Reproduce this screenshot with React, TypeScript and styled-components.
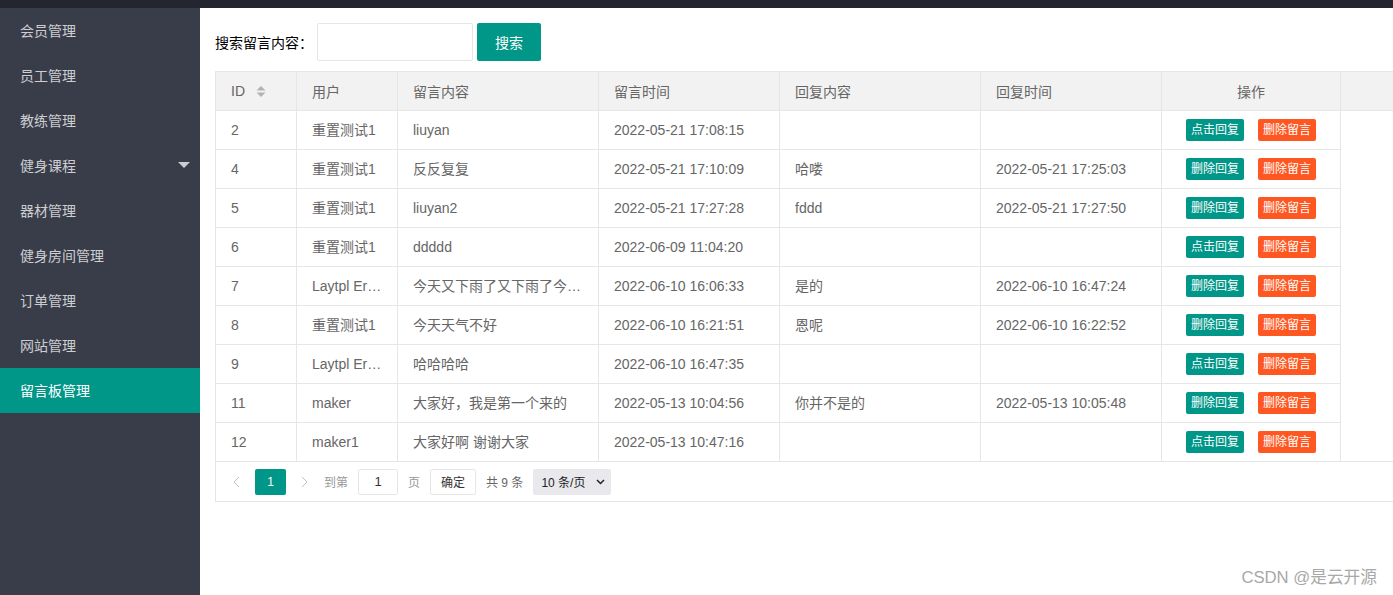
import React from 'react';
import styled, { createGlobalStyle } from 'styled-components';

const GlobalStyle = createGlobalStyle`
	html, body {
		margin: 0;
		padding: 0;
		overflow: hidden;
		background: #fff;
		font-family: 'Liberation Sans', 'Noto Sans CJK SC', Arial, sans-serif;
		font-size: 14px;
		color: #666;
	}
	* {
		box-sizing: border-box;
	}
`;

const TopBar = styled.div`
	height: 8px;
	background: #23262e;
`;

const Layout = styled.div`
	display: flex;
	height: 587px;
`;

const Side = styled.nav`
	width: 200px;
	flex-shrink: 0;
	background: #393d49;
`;

const MenuItem = styled.div<{ $active?: boolean }>`
	display: flex;
	align-items: center;
	justify-content: space-between;
	height: 45px;
	padding: 0 10px 2px 20px;
	font-size: 14px;
	color: ${(p) => (p.$active ? '#fff' : 'rgba(255, 255, 255, 0.75)')};
	background: ${(p) => (p.$active ? '#009688' : 'transparent')};
`;

const Caret = styled.span`
	width: 0;
	height: 0;
	border-left: 6px solid transparent;
	border-right: 6px solid transparent;
	border-top: 6px solid rgba(255, 255, 255, 0.75);
	margin-top: 1px;
`;

const Main = styled.main`
	flex: 1;
	min-width: 0;
	overflow: hidden;
	padding: 15px 0 0 15px;
`;

const SearchRow = styled.div`
	display: flex;
	align-items: center;
	height: 38px;
	margin-bottom: 10px;
`;

const SearchLabel = styled.label`
	color: #000;
	font-size: 14px;
	margin-right: 4px;
`;

const SearchInput = styled.input`
	width: 156px;
	height: 38px;
	border: 1px solid #e6e6e6;
	border-radius: 2px;
	padding: 0 10px;
	outline: 0;
	font: inherit;
`;

const SearchButton = styled.button`
	width: 64px;
	height: 38px;
	margin-left: 4px;
	border: 0;
	border-radius: 2px;
	background: #009688;
	color: #fff;
	font: inherit;
	font-size: 14px;
`;

const TableBox = styled.div`
	width: 1200px;
	border-left: 1px solid #e6e6e6;
	border-bottom: 1px solid #e6e6e6;
`;

const Table = styled.table`
	border-collapse: collapse;
	table-layout: fixed;
	width: 100%;
	margin-left: -1px;
`;

const Th = styled.th<{ $center?: boolean }>`
	height: 39px;
	padding: 0 15px;
	background: #f2f2f2;
	border: 1px solid #e6e6e6;
	font-weight: normal;
	text-align: ${(p) => (p.$center ? 'center' : 'left')};
	color: #666;
	white-space: nowrap;
`;

const Td = styled.td<{ $center?: boolean; $blank?: boolean }>`
	height: 39px;
	padding: 0 15px;
	border: ${(p) => (p.$blank ? '0' : '1px solid #e6e6e6')};
	border-left: 1px solid #e6e6e6;
	text-align: ${(p) => (p.$center ? 'center' : 'left')};
	color: #666;
`;

const Cell = styled.div`
	white-space: nowrap;
	overflow: hidden;
	text-overflow: ellipsis;
	line-height: 20px;
`;

const SortIcon = styled.svg`
	margin-left: 11px;
	vertical-align: -2px;
`;

const Actions = styled.div`
	display: flex;
	justify-content: center;
	gap: 14px;
`;

const SmallBtn = styled.button<{ $danger?: boolean }>`
	width: 58px;
	height: 22px;
	padding: 0;
	border: 0;
	border-radius: 2px;
	background: ${(p) => (p.$danger ? '#ff5722' : '#009688')};
	color: #fff;
	font: inherit;
	font-size: 12px;
	line-height: 22px;
`;

const PageBar = styled.div`
	display: flex;
	align-items: center;
	height: 40px;
	border-top: 1px solid #e6e6e6;
	margin-top: -1px;
	padding-left: 5px;
	font-size: 12px;
	color: #999;
`;

const Arrow = styled.span`
	display: flex;
	align-items: center;
	justify-content: center;
	width: 31px;
	height: 26px;
`;

const PageCurrent = styled.span`
	display: flex;
	align-items: center;
	justify-content: center;
	width: 31px;
	height: 26px;
	margin: 0 3px;
	border-radius: 2px;
	background: #009688;
	color: #fff;
	font-size: 12px;
`;

const PageText = styled.span<{ $gap?: number; $tone?: string }>`
	margin-left: ${(p) => p.$gap ?? 0}px;
	color: ${(p) => p.$tone ?? '#999'};
`;

const PageInput = styled.input`
	width: 40px;
	height: 26px;
	margin: 0 10px;
	border: 1px solid #e6e6e6;
	border-radius: 2px;
	text-align: center;
	font: inherit;
	font-size: 13px;
	color: #333;
	outline: 0;
`;

const PageConfirm = styled.button`
	width: 46px;
	height: 26px;
	margin-left: 10px;
	padding: 0;
	border: 1px solid #e6e6e6;
	border-radius: 2px;
	background: #fff;
	color: #333;
	font: inherit;
	font-size: 12px;
`;

const PageSelect = styled.div`
	display: flex;
	align-items: center;
	justify-content: space-between;
	width: 78px;
	height: 26px;
	margin-left: 10px;
	padding: 0 6px 0 8px;
	background: #e9e9ed;
	border-radius: 2px;
	color: #222;
	font-size: 12px;
`;

const Watermark = styled.div`
	position: absolute;
	right: 16px;
	bottom: 7px;
	font-size: 16.7px;
	color: #a8a8a8;
`;

const menus = ['会员管理', '员工管理', '教练管理', '健身课程', '器材管理', '健身房间管理', '订单管理', '网站管理', '留言板管理'];

type Row = { id: number; user: string; content: string; time: string; reply: string; replyTime: string };

const rows: Row[] = [
	{ id: 2, user: '重置测试1', content: 'liuyan', time: '2022-05-21 17:08:15', reply: '', replyTime: '' },
	{ id: 4, user: '重置测试1', content: '反反复复', time: '2022-05-21 17:10:09', reply: '哈喽', replyTime: '2022-05-21 17:25:03' },
	{ id: 5, user: '重置测试1', content: 'liuyan2', time: '2022-05-21 17:27:28', reply: 'fddd', replyTime: '2022-05-21 17:27:50' },
	{ id: 6, user: '重置测试1', content: 'ddddd', time: '2022-06-09 11:04:20', reply: '', replyTime: '' },
	{ id: 7, user: 'Laytpl Error 测试', content: '今天又下雨了又下雨了今天又下雨了', time: '2022-06-10 16:06:33', reply: '是的', replyTime: '2022-06-10 16:47:24' },
	{ id: 8, user: '重置测试1', content: '今天天气不好', time: '2022-06-10 16:21:51', reply: '恩呢', replyTime: '2022-06-10 16:22:52' },
	{ id: 9, user: 'Laytpl Error 测试', content: '哈哈哈哈', time: '2022-06-10 16:47:35', reply: '', replyTime: '' },
	{ id: 11, user: 'maker', content: '大家好，我是第一个来的', time: '2022-05-13 10:04:56', reply: '你并不是的', replyTime: '2022-05-13 10:05:48' },
	{ id: 12, user: 'maker1', content: '大家好啊 谢谢大家', time: '2022-05-13 10:47:16', reply: '', replyTime: '' },
];

const cols = [81, 101, 201, 181, 201, 181, 179];

const Chevron = ({ dir }: { dir: 'left' | 'right' }) => (
	<svg width="7" height="12" viewBox="0 0 7 12">
		<path
			d={dir === 'left' ? 'M6 1 L1 6 L6 11' : 'M1 1 L6 6 L1 11'}
			fill="none"
			stroke="#c2c2c2"
			strokeWidth="1"
		/>
	</svg>
);

const App = () => (
	<>
		<GlobalStyle />
		<TopBar />
		<Layout>
			<Side>
				{menus.map((m, i) => (
					<MenuItem key={m} $active={i === menus.length - 1}>
						{m}
						{m === '健身课程' && <Caret />}
					</MenuItem>
				))}
			</Side>
			<Main>
				<SearchRow>
					<SearchLabel>搜索留言内容：</SearchLabel>
					<SearchInput />
					<SearchButton>搜索</SearchButton>
				</SearchRow>
				<TableBox>
					<Table>
						<colgroup>
							{cols.map((w, i) => (
								<col key={i} style={{ width: w }} />
							))}
							<col />
						</colgroup>
						<thead>
							<tr>
								<Th>
									ID
									<SortIcon width="10" height="13" viewBox="0 0 10 13">
										<path d="M5 1 L9.5 5.5 L0.5 5.5 Z" fill="#b2b2b2" />
										<path d="M5 12 L9.5 7.5 L0.5 7.5 Z" fill="#b2b2b2" />
									</SortIcon>
								</Th>
								<Th>用户</Th>
								<Th>留言内容</Th>
								<Th>留言时间</Th>
								<Th>回复内容</Th>
								<Th>回复时间</Th>
								<Th $center>操作</Th>
								<Th />
							</tr>
						</thead>
						<tbody>
							{rows.map((r) => (
								<tr key={r.id}>
									<Td><Cell>{r.id}</Cell></Td>
									<Td><Cell>{r.user}</Cell></Td>
									<Td><Cell>{r.content}</Cell></Td>
									<Td><Cell>{r.time}</Cell></Td>
									<Td><Cell>{r.reply}</Cell></Td>
									<Td><Cell>{r.replyTime}</Cell></Td>
									<Td $center>
										<Actions>
											<SmallBtn>{r.reply ? '删除回复' : '点击回复'}</SmallBtn>
											<SmallBtn $danger>删除留言</SmallBtn>
										</Actions>
									</Td>
									<Td $blank />
								</tr>
							))}
						</tbody>
					</Table>
					<PageBar>
						<Arrow><Chevron dir="left" /></Arrow>
						<PageCurrent>1</PageCurrent>
						<Arrow><Chevron dir="right" /></Arrow>
						<PageText $gap={4}>到第</PageText>
						<PageInput defaultValue="1" />
						<PageText>页</PageText>
						<PageConfirm>确定</PageConfirm>
						<PageText $gap={10} $tone="#666">共 9 条</PageText>
						<PageSelect>
							10 条/页
							<svg width="9" height="6" viewBox="0 0 9 6">
								<path d="M1 1 L4.5 4.5 L8 1" fill="none" stroke="#222" strokeWidth="1.5" />
							</svg>
						</PageSelect>
					</PageBar>
				</TableBox>
			</Main>
		</Layout>
		<Watermark>CSDN @是云开源</Watermark>
	</>
);

export default App;
